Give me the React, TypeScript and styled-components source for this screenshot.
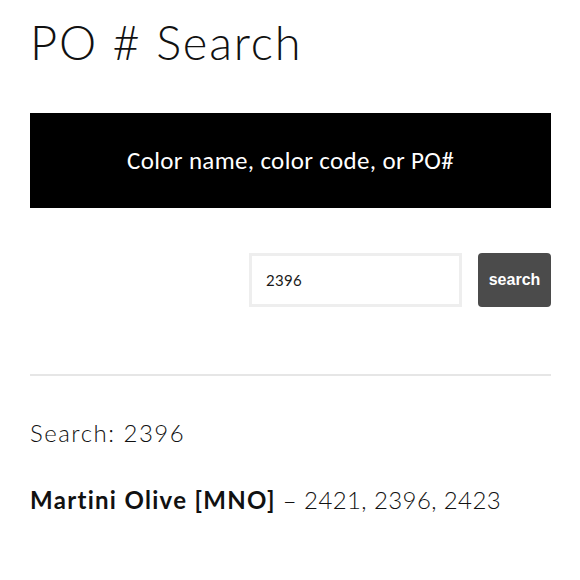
import styled, { createGlobalStyle } from 'styled-components';

const GlobalStyle = createGlobalStyle`
    html, body {
        margin: 0;
        padding: 0;
        background: #fff;
    }
    body {
        font-family: Lato, "Noto Sans", sans-serif;
        color: #111;
    }
`;

const Page = styled.main`
    width: 521px;
    padding: 0 29px 0 30px;
    display: flex;
    flex-direction: column;
`;

const Title = styled.h1`
    margin: 12px 0 0;
    font-size: 47px;
    font-weight: 300;
    line-height: 60px;
    letter-spacing: 1.8px;
    color: #111;
`;

const Banner = styled.div`
    margin-top: 41px;
    height: 95px;
    background: #000;
    color: #fff;
    display: flex;
    align-items: center;
    justify-content: center;
    font-family: Carlito, Lato, sans-serif;
    font-size: 25px;
    letter-spacing: 0.35px;
`;

const SearchForm = styled.form`
    margin-top: 45px;
    display: flex;
    justify-content: flex-end;
    gap: 16px;
`;

const Input = styled.input`
    width: 213px;
    height: 54px;
    box-sizing: border-box;
    border: 3px solid #eeeeee;
    padding: 0 14px;
    font-family: Lato, sans-serif;
    font-weight: 400;
    font-size: 15px;
    letter-spacing: 0.3px;
    color: #1a1a1a;
    outline: none;
`;

const Button = styled.button`
    width: 73px;
    height: 54px;
    border: none;
    border-radius: 4px;
    background: #4b4b4b;
    color: #fff;
    font-family: "Liberation Sans", Arial, sans-serif;
    font-weight: bold;
    font-size: 16px;
    padding: 0;
`;

const Rule = styled.hr`
    margin: 67px 0 0;
    border: none;
    border-top: 2px solid #e6e6e6;
`;

const Line = styled.p`
    margin: 0;
    font-size: 24px;
    font-weight: 300;
    line-height: 30px;
    color: #111;
`;

const Query = styled(Line)`
    margin-top: 42px;
    letter-spacing: 1.5px;
`;

const Result = styled(Line)`
    margin-top: 37px;
    letter-spacing: 0.4px;
    b {
        font-weight: 700;
        letter-spacing: 1.3px;
    }
`;

export default function App() {
    return (
        <>
            <GlobalStyle />
            <Page>
                <Title>PO # Search</Title>
                <Banner>Color name, color code, or PO#</Banner>
                <SearchForm onSubmit={e => e.preventDefault()}>
                    <Input defaultValue="2396" />
                    <Button type="submit">search</Button>
                </SearchForm>
                <Rule />
                <Query>Search: 2396</Query>
                <Result>
                    <b>Martini Olive [MNO]</b> – 2421, 2396, 2423
                </Result>
            </Page>
        </>
    );
}
